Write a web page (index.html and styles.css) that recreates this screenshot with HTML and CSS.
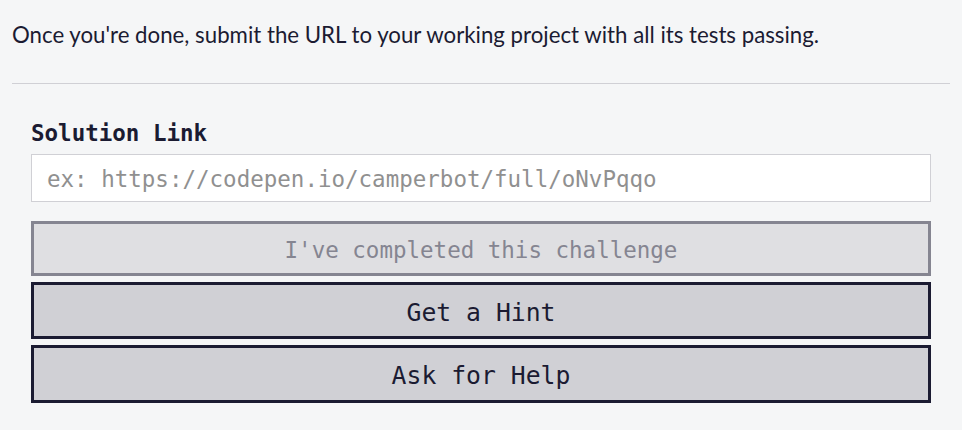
FILE: index.html
```html
<!DOCTYPE html>
<html lang="en">
<head>
<meta charset="utf-8">
<title>Solution</title>
<link rel="stylesheet" href="styles.css">
</head>
<body>
<main class="page">
  <p class="intro">Once you're done, submit the URL to your working project with all its tests passing.</p>
  <hr class="divider">
  <form class="form">
    <label class="label" for="solution">Solution Link</label>
    <input class="input" id="solution" type="text" placeholder="ex: https://codepen.io/camperbot/full/oNvPqqo">
    <button class="btn btn-disabled" type="button">I've completed this challenge</button>
    <button class="btn btn-primary" type="button">Get a Hint</button>
    <button class="btn btn-primary" type="button">Ask for Help</button>
  </form>
</main>
</body>
</html>
```
FILE: styles.css
```css
* { box-sizing: border-box; }

body {
  margin: 0;
  background: #f5f6f7;
  color: #1b1b32;
  font-family: Lato, "Open Sans", sans-serif;
}

.page {
  padding: 18px 12px 0;
}

.intro {
  margin: 0;
  font-size: 22.25px;
  line-height: 33.75px;
}

.divider {
  border: 0;
  border-top: 1px solid #d0d0d5;
  margin: 31px 0 0;
  height: 0;
}

.form {
  display: flex;
  flex-direction: column;
  padding: 36px 19px 0;
}

.label {
  font-family: "DejaVu Sans Mono", "Liberation Mono", monospace;
  font-weight: bold;
  font-size: 22.5px;
  line-height: 27px;
  color: #1b1b32;
}

.input {
  margin-top: 7px;
  height: 48px;
  border: 1px solid #d0d0d5;
  background: #fff;
  padding: 2px 15px 0;
  font-family: "DejaVu Sans Mono", "Liberation Mono", monospace;
  font-size: 22.5px;
  color: #1b1b32;
  outline: none;
}

.input::placeholder {
  color: #909090;
}

.btn {
  display: block;
  width: 100%;
  margin: 6px 0 0;
  padding: 3px 16px 0;
  border: 3px solid #1b1b32;
  border-radius: 0;
  font-family: "DejaVu Sans Mono", "Liberation Mono", monospace;
  text-align: center;
}

.btn-disabled {
  margin-top: 19px;
  height: 55px;
  border-color: #858591;
  background: #dfdfe2;
  color: #858591;
  font-size: 22.5px;
}

.btn-primary {
  height: 57.5px;
  background: #d0d0d5;
  color: #1b1b32;
  font-size: 24.75px;
}
```
